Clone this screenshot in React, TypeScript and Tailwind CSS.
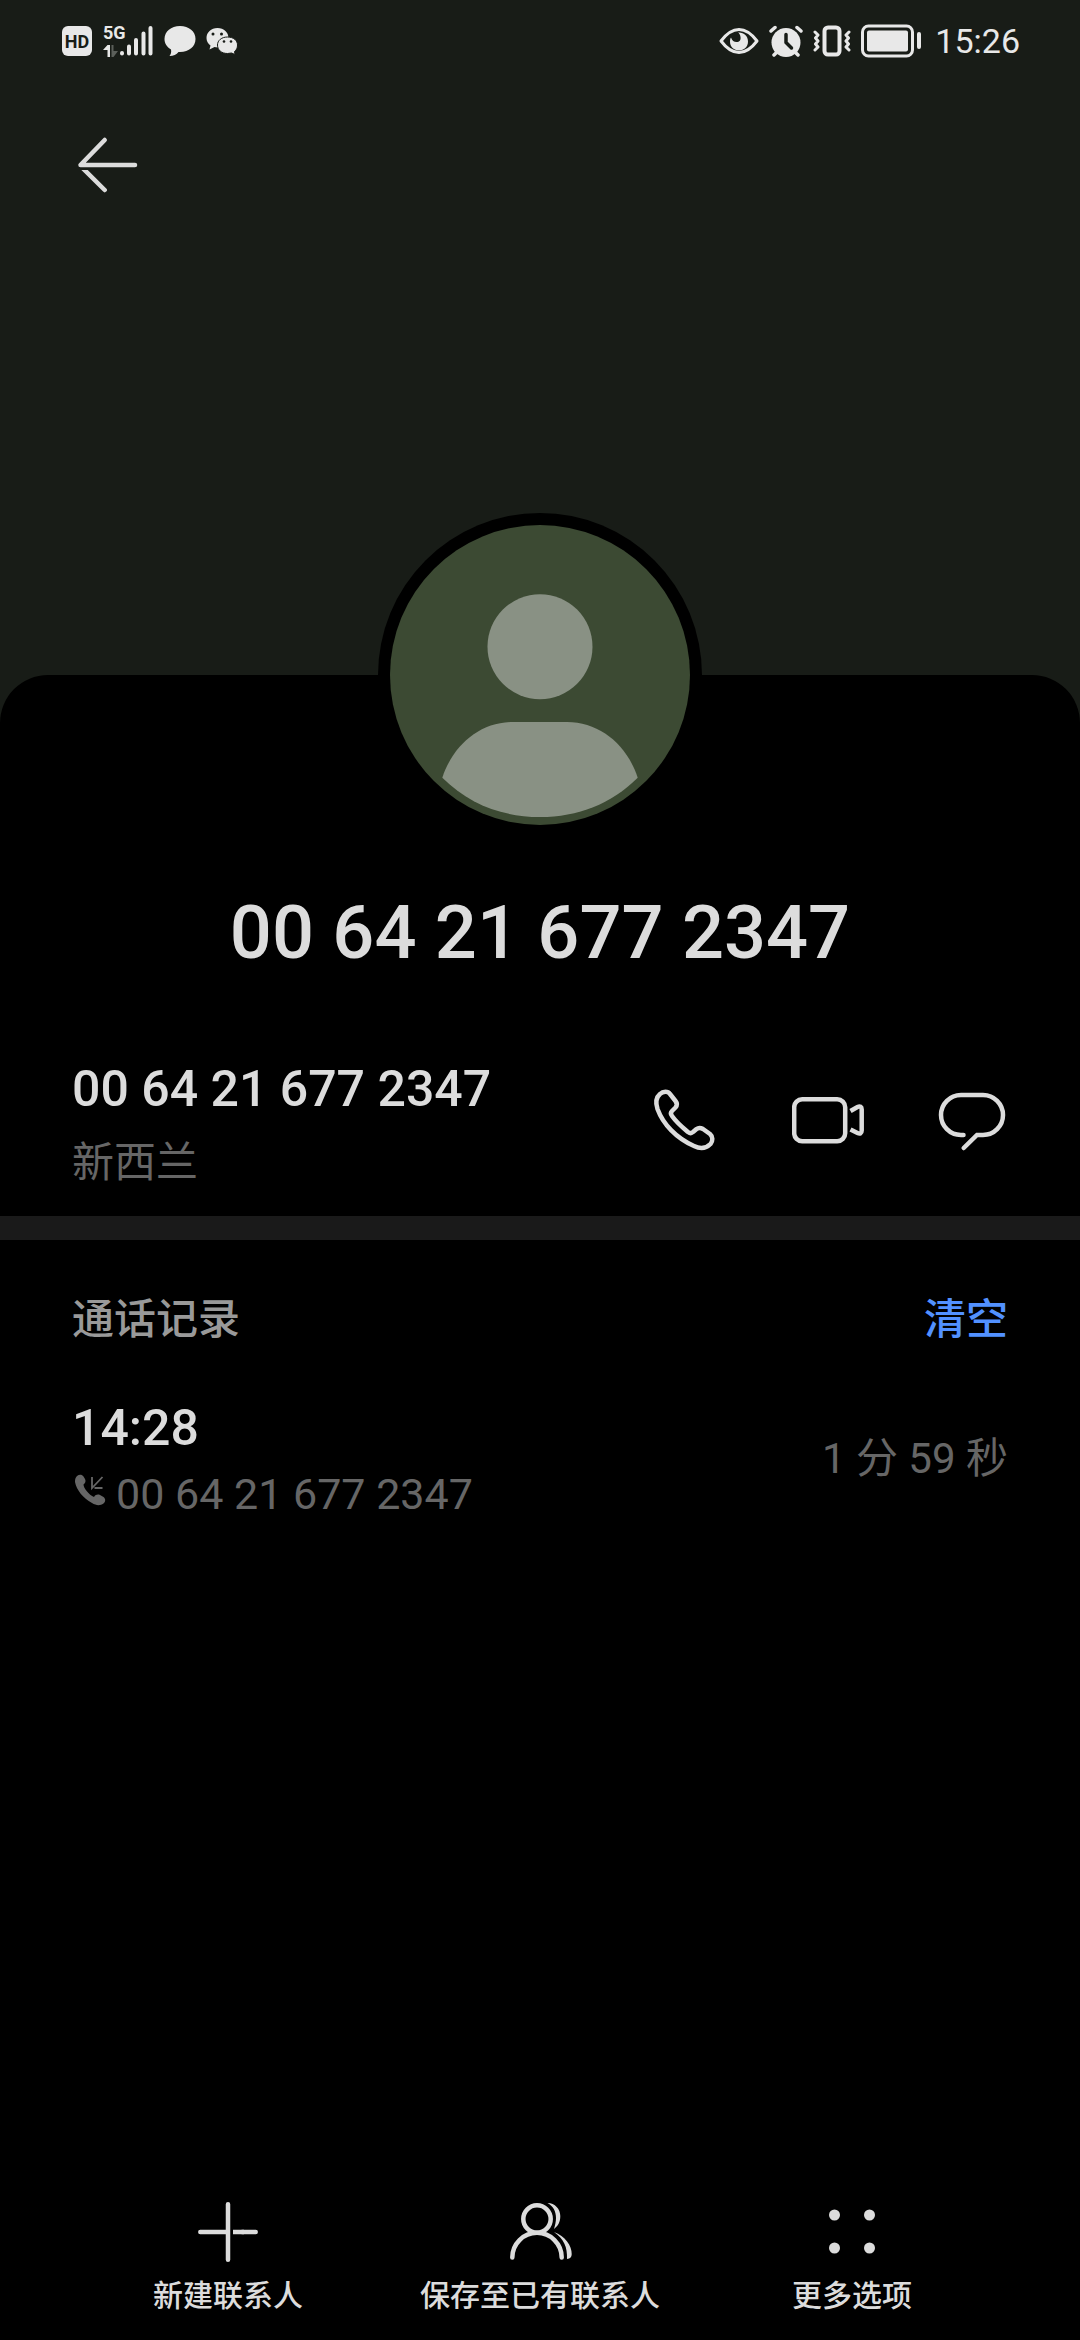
import React from 'react';

interface IconProps {
  className?: string;
}

const PHONE_NUMBER = '00 64 21 677 2347';

/* ---------- Status bar icons ---------- */

const SignalIcon = () => (
  <svg viewBox="0 0 34 32" className="h-8 w-[34px]" fill="none" stroke="currentColor" strokeWidth="4" strokeLinecap="round" aria-hidden="true">
    <path d="M2 28V28.5M9 21.5V28.5M16 15V28.5M23.5 8.5V28.5M30.5 3V28.5" />
  </svg>
);

const DataArrowsIcon = () => (
  <svg viewBox="0 0 16 12" className="h-3 w-4" aria-hidden="true">
    <path d="M4.5 0H7V12H4.5V5H0Z" fill="currentColor" />
    <path d="M8.5 0H10.5V6H15L10.5 12H8.5Z" fill="#5b5f5a" />
  </svg>
);

const BubbleIcon = () => (
  <svg viewBox="0 0 32 32" className="size-8" fill="currentColor" aria-hidden="true">
    <path d="M16 1C25 1 31.5 6.5 31.5 14C31.5 21.5 25 27 16 27H14.5C12.5 29.5 9.5 31 5.5 31C7 29 7.5 27 7 24.5C3 22 .5 18.5 .5 14C.5 6.5 7 1 16 1Z" />
  </svg>
);

const WeChatIcon = () => (
  <svg viewBox="0 0 32 28" className="h-7 w-8" aria-hidden="true">
    <path d="M11.5 1C18 1 22.5 5.5 22.5 11C22.5 17 18 20.5 11.5 20.5L8.5 20L3.5 22.5L4.5 18.5C2 16.5 .5 14 .5 11C.5 5.5 5 1 11.5 1Z" fill="currentColor" />
    <path d="M21.5 10C27.5 10 31.5 13.5 31.5 18C31.5 21 30.5 23 28.5 24.5L29 27.5L25.5 26L21.5 26.5C15.5 26.5 11.5 23 11.5 18C11.5 13.5 15.5 10 21.5 10Z" fill="currentColor" stroke="#181c17" />
    <g fill="#181c17">
      <circle cx="7" cy="7" r="1.5" />
      <circle cx="15.5" cy="7" r="1.5" />
      <circle cx="18" cy="14.5" r="1.3" />
      <circle cx="25" cy="14.5" r="1.3" />
    </g>
  </svg>
);

const EyeIcon = () => (
  <svg viewBox="0 0 40 28" className="h-7 w-10" aria-hidden="true">
    <path d="M2 14C8 6 14 2.5 20 2.5S32 6 38 14C32 22 26 25.5 20 25.5S8 22 2 14Z" fill="none" stroke="currentColor" strokeWidth="3" strokeLinejoin="round" />
    <path d="M20 5.5C25 5.5 29 9 29 14.5S25 23.5 20 23.5S11 20 11 14.5C11 13 11.3 11.5 12 10.5C13 13.5 15 15 17.5 15C20.5 15 22 13 21.5 10C21.3 8 20.5 6.5 19 5.5Z" fill="currentColor" />
  </svg>
);

const AlarmIcon = () => (
  <svg viewBox="0 0 34 32" className="h-8 w-[34px]" fill="none" strokeLinecap="round" aria-hidden="true">
    <circle cx="17" cy="17.5" r="14.5" fill="currentColor" />
    <path d="M2 6L6 2.5M32 6L28 2.5M5 30L8 27M29 30L26 27" stroke="currentColor" strokeWidth="3.5" />
    <path d="M17 9.5V17.5L22.5 23" stroke="#181c17" strokeWidth="3.5" strokeLinejoin="round" />
  </svg>
);

const VibrateIcon = () => (
  <svg viewBox="0 0 38 32" className="h-8 w-[38px]" fill="none" stroke="currentColor" strokeLinecap="round" strokeLinejoin="round" aria-hidden="true">
    <rect x="11.5" y="2.5" width="15" height="27" rx="3.5" strokeWidth="4" />
    <path d="M2 7L5 10L2.5 13L5 16L2.5 19L5 22L2 25M36 7L33 10L35.5 13L33 16L35.5 19L33 22L36 25" strokeWidth="3" />
  </svg>
);

const BatteryIcon = () => (
  <svg viewBox="0 0 60 34" className="h-[34px] w-[60px]" aria-hidden="true">
    <rect x="1.5" y="2" width="50" height="30" rx="6" fill="none" stroke="currentColor" strokeWidth="3" />
    <rect x="6" y="6.5" width="41" height="21" rx="2" fill="currentColor" />
    <rect x="56" y="8" width="4" height="17" rx="2" fill="currentColor" />
  </svg>
);

/* ---------- Page icons, all on a 72px grid ---------- */

const Icon72 = ({ children }: { children: React.ReactNode }) => (
  <svg viewBox="0 0 72 72" className="size-[72px]" fill="none" stroke="currentColor" strokeWidth="4.5" aria-hidden="true">
    {children}
  </svg>
);

const BackIcon = () => (
  <Icon72>
    <clipPath id="back-lower">
      <rect x="0" y="41" width="72" height="31" />
    </clipPath>
    <path d="M63 36H8.5L32.7 11" strokeLinecap="round" strokeLinejoin="round" />
    <path d="M8 36.5L32.7 61" strokeLinecap="round" clipPath="url(#back-lower)" />
  </Icon72>
);

const CallIcon = () => (
  <Icon72>
    <path
      d="M12 10C15 7 20 7 22 10L27.5 17C29.5 19.5 29.3 21.5 27.5 23.5L24 27C22.5 28.5 22.5 30 24 32C29 39 34 43 40 48C42 49.5 43.5 49.5 45 48L48.5 45C50.5 43.5 52.5 43.5 55 45L62 50C65 52.5 65 57 62.5 60C58 64.5 52 65 46 62C28 54 15 40 9.5 25C7.5 19 8 13.5 12 10Z"
      strokeLinejoin="round"
    />
  </Icon72>
);

const VideoIcon = () => (
  <Icon72>
    <rect x="2.2" y="15.2" width="51" height="42" rx="8" />
    <path d="M58.5 27L65.5 23C68 21.8 69.7 22.8 69.7 25.5V46.5C69.7 49.2 68 50.2 65.5 49L58.5 45.5" />
  </Icon72>
);

const MessageIcon = () => (
  <Icon72>
    <path d="M27.5 51H25A20 20 0 0 1 25 11H47A20 20 0 0 1 47 51H41L27.7 64" strokeLinecap="round" />
  </Icon72>
);

const PlusIcon = () => (
  <Icon72>
    <path d="M36 8.3V63.7M8.3 36H36M63.7 36H50" strokeLinecap="round" />
    <path d="M41 36H52" />
  </Icon72>
);

const PeopleIcon = () => (
  <Icon72>
    <circle cx="33" cy="23" r="13.7" />
    <path d="M8.3 61.5A24.7 24.7 0 0 1 57.7 61.5" strokeLinecap="round" />
    <g fill="currentColor" stroke="none">
      <path d="M43.5 7C51 7 56.3 13 56.3 20C56.3 26 54 30 50 33C51 29 52 26 52 22C52 15 49 10 43.5 7Z" />
      <path d="M50 36C61 40 68 50 67.7 58C67.6 61 66.5 62.5 63 63C63.5 51 60 43 50 36Z" />
    </g>
  </Icon72>
);

const MoreIcon = () => (
  <Icon72>
    <g fill="currentColor" stroke="none">
      <circle cx="18.5" cy="19" r="5.5" />
      <circle cx="53.5" cy="19" r="5.5" />
      <circle cx="18.5" cy="52" r="5.5" />
      <circle cx="53.5" cy="52" r="5.5" />
    </g>
  </Icon72>
);

const IncomingCallIcon = ({ className }: IconProps) => (
  <svg viewBox="0 0 34 34" className={className} aria-hidden="true">
    <path
      d="M3 3C5.5 1 8 1.5 9.5 3.5L11 6C12 8 11.5 10 9.5 11.5C9.5 15 15 22 20 24C21.5 21.5 24 21 26 22L29.5 24C32 26 31.5 29 29.5 30.5C26 33 22 32.5 18 30C9 25 2.5 17 1 9C1 6 1.5 4.5 3 3Z"
      fill="currentColor"
    />
    <path d="M18 4V15L28.5 4M20.5 15H28.5" fill="none" stroke="currentColor" strokeWidth="1.8" />
  </svg>
);

const Avatar = () => (
  <svg viewBox="0 0 300 300" className="size-[300px] rounded-full bg-[#3c4a33]" fill="#899184" role="img" aria-label="头像">
    <circle cx="150" cy="121.7" r="52.5" />
    <path d="M52.3 252.7C63 220 90 197 123 197H177C210 197 237 220 247.7 252.7C221 279 188 292 150 292C112 292 79 279 52.3 252.7Z" />
  </svg>
);

const StatusBar = () => (
  <div className="flex h-[82px] items-center justify-between pr-[60px] pl-[62px] text-[#e8e8e8]">
    <div className="flex items-center">
      <span className="flex size-[30px] items-center justify-center rounded-md bg-[#e8e8e8] text-[18px] font-bold text-[#181c17]">
        HD
      </span>
      <div className="ml-[11px] flex w-[17px] flex-col gap-1">
        <span className="text-[18px] leading-4 font-bold">5G</span>
        <DataArrowsIcon />
      </div>
      <SignalIcon />
      <div className="ml-[10px] flex items-center gap-[10px]">
        <BubbleIcon />
        <WeChatIcon />
      </div>
    </div>

    <div className="flex items-center gap-[10px]">
      <EyeIcon />
      <AlarmIcon />
      <VibrateIcon />
      <BatteryIcon />
      <span className="ml-1 text-[34px] leading-10">15:26</span>
    </div>
  </div>
);

const contactActions = [
  { label: '拨打电话', icon: <CallIcon /> },
  { label: '视频通话', icon: <VideoIcon /> },
  { label: '发送信息', icon: <MessageIcon /> },
];

const bottomActions = [
  { label: '新建联系人', icon: <PlusIcon /> },
  { label: '保存至已有联系人', icon: <PeopleIcon /> },
  { label: '更多选项', icon: <MoreIcon /> },
];

export default function App() {
  return (
    <div className="flex min-h-screen flex-col bg-[#181c17] font-['Roboto','Noto_Sans_CJK_SC',sans-serif] text-[#dcdcdc]" lang="zh-CN">
      <StatusBar />

      <header className="h-[593px] px-[72px] pt-[47px]">
        <button type="button" aria-label="返回" className="block">
          <BackIcon />
        </button>
      </header>

      <main className="flex flex-1 flex-col rounded-t-[48px] bg-black">
        <div className="-mt-[162px] self-center rounded-full bg-black p-3">
          <Avatar />
        </div>
        <h1 className="mt-[51px] text-center text-[74px] leading-[90px] font-medium">{PHONE_NUMBER}</h1>

        {/* NUMBER + ACTIONS */}
        <section className="mt-[79px] flex items-start justify-between px-[72px] pb-[23px]">
          <div>
            <p className="text-[50px] leading-[64px] font-medium">{PHONE_NUMBER}</p>
            <p className="mt-3 text-[42px] leading-[60px] text-[#666666]">新西兰</p>
          </div>
          <div className="flex gap-[72px] pt-[27px]">
            {contactActions.map((action) => (
              <button key={action.label} type="button" aria-label={action.label}>
                {action.icon}
              </button>
            ))}
          </div>
        </section>

        <div className="h-6 bg-[#1a1a1a]" />

        {/* CALL LOG */}
        <section className="flex-1 px-[72px] pt-[50px]">
          <div className="flex items-center justify-between text-[42px] leading-[60px] font-medium">
            <h2 className="text-[#999999]">通话记录</h2>
            <button type="button" className="text-[#5291ff]">清空</button>
          </div>
          <div className="mt-[46px] flex items-center justify-between leading-[64px] text-[#666666]">
            <div>
              <p className="text-[50px] font-medium text-[#dcdcdc]">14:28</p>
              <p className="mt-0.5 flex items-center text-[43px]">
                <IncomingCallIcon className="mr-2 mb-2 ml-0.5 size-[34px]" />
                {PHONE_NUMBER}
              </p>
            </div>
            <p className="pb-1 text-[42px]">1 分 59 秒</p>
          </div>
        </section>

        {/* BOTTOM TOOLBAR */}
        <nav className="grid grid-cols-3 px-[72px] pb-6">
          {bottomActions.map((action) => (
            <button key={action.label} type="button" className="flex flex-col items-center gap-2">
              {action.icon}
              <span className="text-[30px] leading-10 font-medium whitespace-nowrap">{action.label}</span>
            </button>
          ))}
        </nav>
      </main>
    </div>
  );
}
